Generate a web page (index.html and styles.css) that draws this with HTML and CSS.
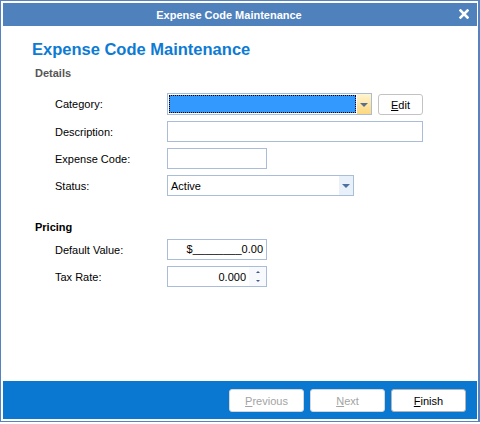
FILE: index.html
```html
<!DOCTYPE html>
<html lang="en">
<head>
    <meta charset="UTF-8">
    <meta name="viewport" content="width=device-width, initial-scale=1.0">
    <title>Expense Code Maintenance</title>
    <link rel="stylesheet" href="styles.css">
</head>
<body>
    <div class="window">
        <div class="titlebar">
            <div class="caption">Expense Code Maintenance</div>
            <div class="close">
                <svg width="10" height="10" viewBox="0 0 10 10">
                    <path d="M1.5 1.5 L8.5 8.5 M8.5 1.5 L1.5 8.5" stroke="#fff" stroke-width="2.6" stroke-linecap="square"/>
                </svg>
            </div>
        </div>
        <div class="content">
            <h1>Expense Code Maintenance</h1>
            <h2 class="section details">Details</h2>

            <div class="row row-first">
                <label>Category:</label>
                <div class="combo">
                    <div class="combo-value"></div>
                    <div class="combo-arrow"><span class="tri"></span></div>
                </div>
                <button class="btn-edit"><u>E</u>dit</button>
            </div>
            <div class="row">
                <label>Description:</label>
                <div class="field wide"></div>
            </div>
            <div class="row">
                <label>Expense Code:</label>
                <div class="field short"></div>
            </div>
            <div class="row">
                <label>Status:</label>
                <div class="field status">
                    <span class="value">Active</span>
                    <div class="status-arrow"><span class="tri"></span></div>
                </div>
            </div>

            <h2 class="section pricing">Pricing</h2>
            <div class="row row-pricing">
                <label>Default Value:</label>
                <div class="field short money">$________0.00</div>
            </div>
            <div class="row">
                <label>Tax Rate:</label>
                <div class="field short rate">
                    <span class="value">0.000</span>
                    <div class="spin">
                        <span class="up"></span>
                        <span class="down"></span>
                    </div>
                </div>
            </div>
        </div>
        <div class="footer">
            <button class="btn-nav" disabled><u>P</u>revious</button>
            <button class="btn-nav" disabled><u>N</u>ext</button>
            <button class="btn-nav"><u>F</u>inish</button>
        </div>
    </div>
</body>
</html>
```

FILE: styles.css
```css
body {
    margin: 0;
    background-color: white;
    font-family: "Liberation Sans", Arial, sans-serif;
    font-size: 11px;
    color: black;
}
.window {
    width: 474px;
    height: 416px;
    border: 1px solid #5683bf;
    border-right-width: 2px;
    padding: 2px 1px 2px 2px;
    display: flex;
    flex-direction: column;
}
.titlebar {
    height: 23px;
    background-color: #4f81bd;
    display: flex;
    align-items: center;
}
.caption {
    flex: 1;
    text-align: center;
    color: white;
    font-weight: bold;
    font-size: 11px;
}
.close {
    width: 22px;
    display: flex;
    align-items: center;
    padding-left: 4px;
    box-sizing: border-box;
    margin-top: -1px;
}
.close svg {
    display: block;
}
.content {
    flex: 1;
    padding: 13px 0 0 29px;
}
h1 {
    margin: 0;
    font-size: 16.5px;
    line-height: 20px;
    color: #0d7bd4;
    font-weight: bold;
}
.section {
    margin: 0;
    font-size: 11px;
    line-height: 14px;
    font-weight: bold;
    padding-left: 3px;
}
.details {
    color: #555555;
    margin-top: 7px;
}
.pricing {
    color: black;
    margin-top: 24px;
}
.row {
    display: flex;
    align-items: center;
    height: 21px;
    margin-top: 6px;
}
.row-first {
    height: 22px;
    margin-top: 13px;
}
.row-pricing {
    margin-top: 5px;
}
.row label {
    width: 112px;
    margin-left: 23px;
    flex: none;
}
.field {
    height: 21px;
    box-sizing: border-box;
    border: 1px solid #a9bdd8;
    background-color: white;
}
.wide {
    width: 256px;
}
.short {
    width: 100px;
}
.combo {
    width: 205px;
    height: 22px;
    box-sizing: border-box;
    border: 1px solid #a9bdd8;
    display: flex;
}
.combo-value {
    flex: 1;
    margin: 1px;
    background-color: #3399ff;
    border: 1px dotted black;
}
.combo-arrow {
    width: 14px;
    background: linear-gradient(#fff5d2, #fdd77c);
    display: flex;
    align-items: center;
    justify-content: center;
}
.tri {
    width: 0;
    height: 0;
    border-left: 4px solid transparent;
    border-right: 4px solid transparent;
    border-top: 4px solid #5a6f8f;
    margin-top: 1px;
}
.btn-edit {
    margin-left: 6px;
    width: 45px;
    height: 21px;
    align-self: flex-end;
    background-color: white;
    border: 1px solid #c3c3c3;
    border-radius: 3px;
    font-family: inherit;
    font-size: 11px;
    color: black;
    padding: 0;
}
.status {
    width: 187px;
    display: flex;
    align-items: center;
}
.status .value {
    flex: 1;
    padding-left: 3px;
}
.status-arrow {
    width: 14px;
    height: 100%;
    background-color: #e8f0fa;
    display: flex;
    align-items: center;
    justify-content: center;
}
.status-arrow .tri {
    border-top-color: #4d6fa3;
}
.money {
    text-align: right;
    padding-right: 3px;
    line-height: 19px;
}
.rate {
    display: flex;
    align-items: center;
}
.rate .value {
    flex: 1;
    text-align: right;
    padding-right: 3px;
}
.spin {
    width: 17px;
    height: 100%;
    display: flex;
    flex-direction: column;
    justify-content: space-around;
    align-items: center;
    background-color: #f7f9fc;
}
.spin span {
    width: 0;
    height: 0;
    border-left: 2px solid transparent;
    border-right: 2px solid transparent;
}
.spin .up {
    border-bottom: 2px solid #3d5a88;
}
.spin .down {
    border-top: 2px solid #3d5a88;
}
.footer {
    height: 38px;
    background-color: #0a78d0;
    display: flex;
    justify-content: flex-end;
    align-items: flex-start;
    gap: 6px;
    padding: 8px 11px 0 0;
    box-sizing: border-box;
}
.btn-nav {
    width: 75px;
    height: 23px;
    background-color: white;
    border: 1px solid #b5b5b5;
    border-radius: 3px;
    font-family: inherit;
    font-size: 11px;
    color: black;
    padding: 0;
}
.btn-nav:disabled {
    color: #a3a3a3;
    border-color: #d6d6d6;
}
```
